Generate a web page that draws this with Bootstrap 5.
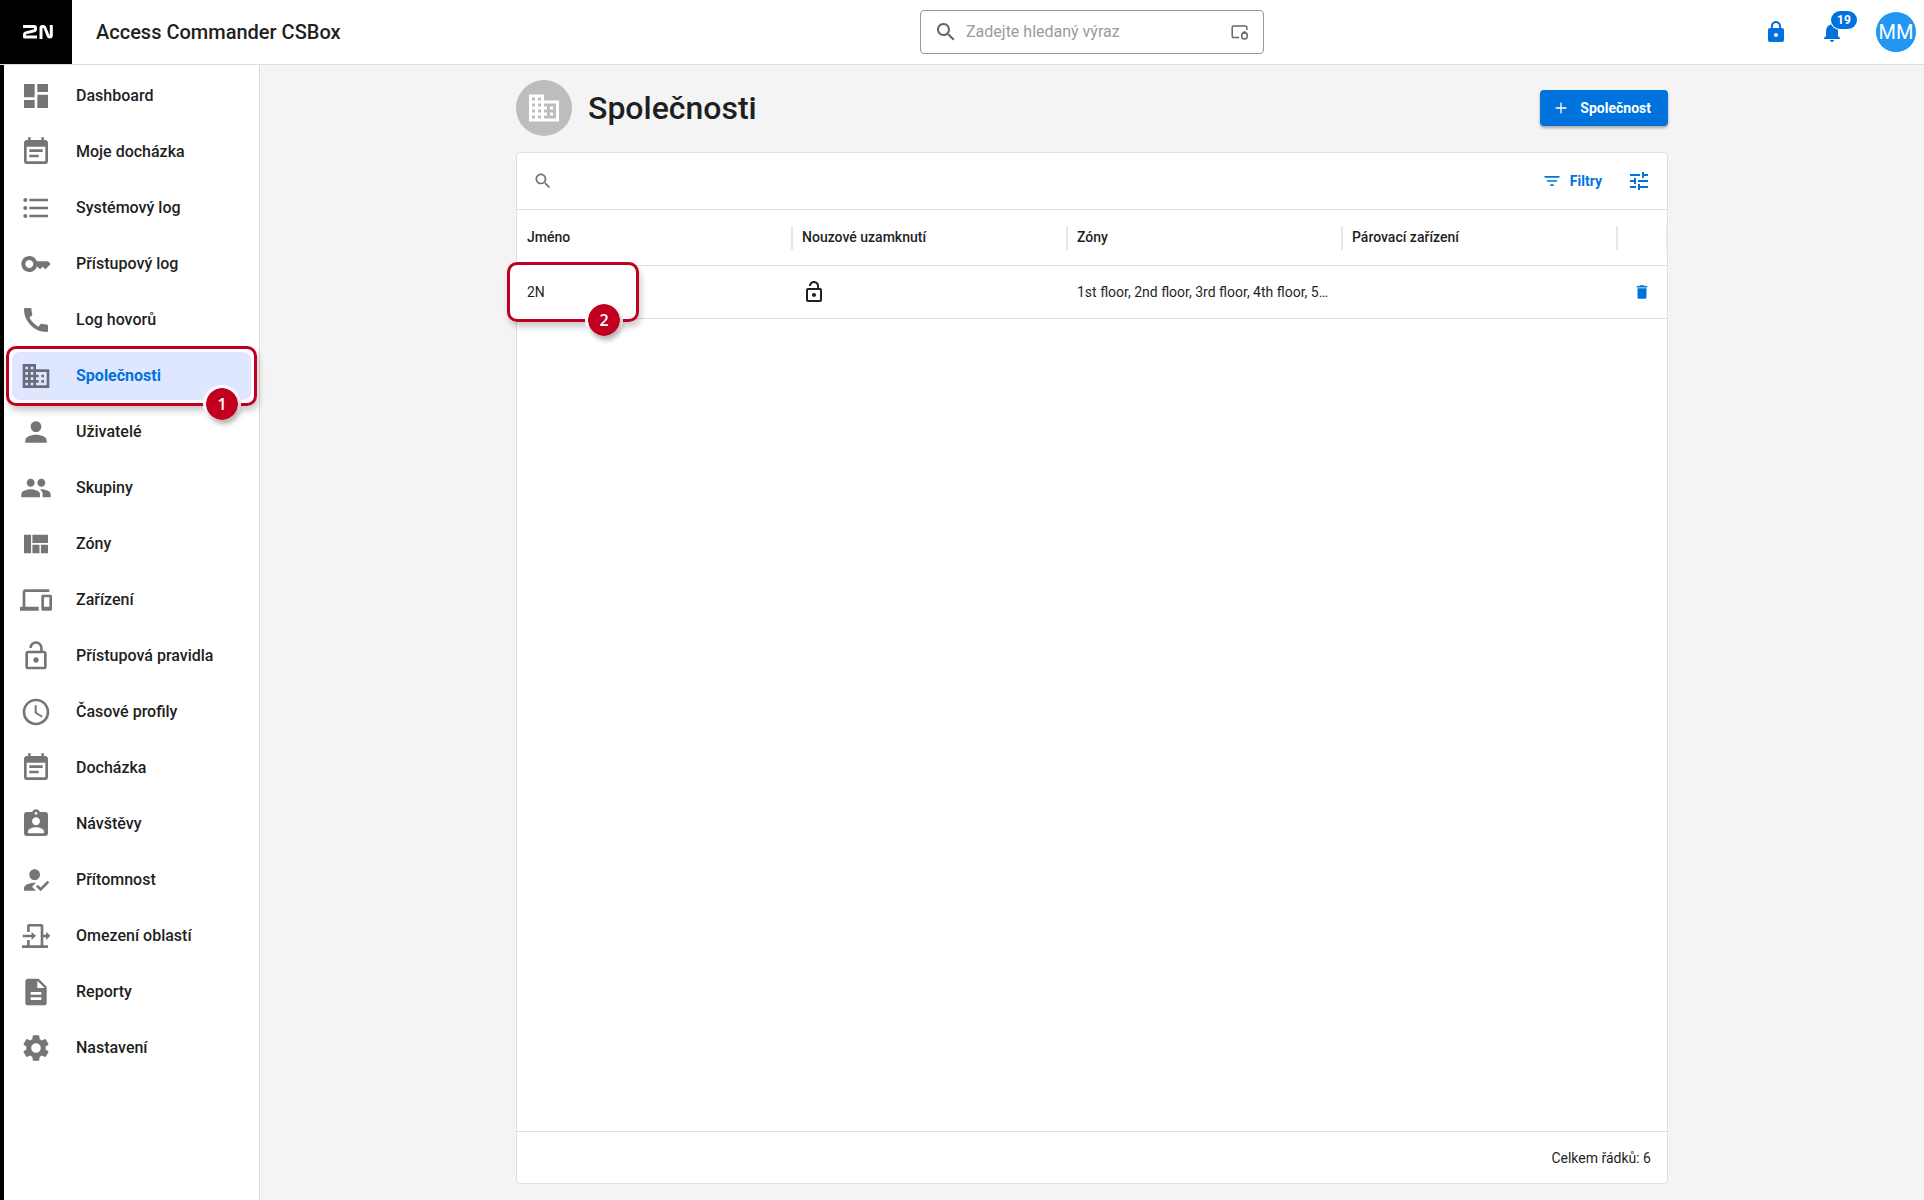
<!DOCTYPE html>
<html lang="cs">
<head>
<meta charset="utf-8">
<meta name="viewport" content="width=device-width, initial-scale=1">
<title>Access Commander – Společnosti</title>
<link href="https://cdn.jsdelivr.net/npm/bootstrap@5.3.0/dist/css/bootstrap.min.css" rel="stylesheet">
<style>
  :root { --brand: #0072de; --ink: #1f1f1f; --line: #e0e0e0; --mark: #c10020; }
  body { font-family: Roboto, "Noto Sans", sans-serif; color: var(--ink); background: #f4f4f4; font-size: 14px; line-height: 20px; }
  svg { fill: currentColor; display: block; flex: none; }
  .line-art { fill: none; stroke: currentColor; }
  .i18 { width: 18px; height: 18px; }
  .i20 { width: 20px; height: 20px; }
  .i24 { width: 24px; height: 24px; }
  .i32 { width: 32px; height: 32px; }
  .i36 { width: 36px; height: 36px; }

  .topbar { height: 65px; border-bottom: 1px solid #d5dff0; }
  .topbar-start { flex: 1 0 260px; }
  .topbar-end { flex: 1 0 0px; width: 0; gap: 16px; }
  .logo-tile { width: 72px; background: #000; color: #fff; }
  .app-name { font-size: 20px; font-weight: 500; margin-left: 24px; }
  .global-search { width: 344px; height: 44px; border: 1px solid #999; border-radius: 4px; padding: 0 14px 0 13px; color: #666; }
  .global-search input { font-size: 16px; color: var(--ink); outline: 0; }
  .global-search input::placeholder { color: #9b9b9b; opacity: 1; }
  .round-btn { width: 40px; height: 40px; color: var(--brand); }
  .count-pill { background: var(--brand); color: #fff; font-size: 12px; font-weight: 700; line-height: 18px; padding: 0 6px; top: -1px; left: 19px; min-width: 26px; box-shadow: 0 0 0 1px #fff; }
  .user-dot { width: 40px; height: 40px; background: #2196f3; color: #fff; font-size: 20px; }

  .side { width: 260px; border-left: 4px solid #000; border-right: 1px solid #dcdcdc; padding: 7px 8px 8px; }
  .side-link { height: 48px; margin-bottom: 8px; padding-left: 8px; gap: 24px; border-radius: 8px; font-size: 16px; font-weight: 500; color: var(--ink); text-decoration: none; }
  .side-link svg { color: #757575; }
  .side-link.current { background: #dfe7ff; color: var(--brand); font-weight: 700; }
  .side-link.current svg { color: #686c7c; }

  .page-wrap { max-width: 1200px; padding: 15px 24px 16px; }
  .page-icon { width: 56px; height: 56px; background: #bdbdbd; color: #fff; }
  .page-title { font-size: 32px; line-height: 40px; font-weight: 500; }
  .btn-add { background: var(--brand); color: #fff; height: 36px; padding: 0 17px 0 11px; gap: 9px; border-radius: 4px; font-size: 14px; font-weight: 700; box-shadow: 0 2px 3px rgba(0,0,0,.3); }
  .panel { border: 1px solid var(--line); border-radius: 4px; margin-top: 16px; }
  .panel-tools { height: 57px; padding: 0 16px; border-bottom: 1px solid var(--line); gap: 25px; }
  .tool-btn { color: var(--brand); font-size: 14px; font-weight: 700; }
  .grid-table { table-layout: fixed; }
  .grid-table th { position: relative; height: 55px; padding: 0 10px; font-weight: 500; border-bottom: 1px solid var(--line); }
  .grid-table th::after { content: ""; position: absolute; right: -1px; top: 16px; width: 2px; height: 24px; background: #e6e6e6; }
  .grid-table td { height: 53px; padding: 0 10px; border-bottom: 1px solid var(--line); }
  .row-action { margin-right: 6px; }
  .panel-foot { height: 52px; padding: 0 16px; border-top: 1px solid var(--line); }

  .callout { position: absolute; border: 3px solid var(--mark); border-radius: 10px; box-shadow: 2px 5px 6px rgba(0,0,0,.2); pointer-events: none; }
  .callout-nav { inset: -6px; }
  .callout-cell { top: -4px; left: -10px; width: 132px; height: 60px; box-shadow: 2px 5px 6px rgba(0,0,0,.2), inset 0 0 0 8px #fff; }
  .callout-num { position: absolute; bottom: -20px; right: 13px; width: 38px; height: 38px; border: 3px solid #fff; border-radius: 50%; background: var(--mark); background-clip: padding-box; color: #fff; font: 600 16px/32px "Open Sans", sans-serif; text-align: center; }
  .callout-num::after { content: ""; position: absolute; inset: 0; border-radius: 50%; box-shadow: 2px 4px 5px rgba(0,0,0,.3); }
</style>
<script src="https://cdn.jsdelivr.net/npm/bootstrap@5.3.0/dist/js/bootstrap.bundle.min.js"></script>
</head>
<body class="d-flex flex-column min-vh-100">
<svg class="d-none" aria-hidden="true">
  <symbol id="i-building" viewBox="0 0 24 24"><path d="M12 7V3H2v18h20V7H12zM6 19H4v-2h2v2zm0-4H4v-2h2v2zm0-4H4V9h2v2zm0-4H4V5h2v2zm4 12H8v-2h2v2zm0-4H8v-2h2v2zm0-4H8V9h2v2zm0-4H8V5h2v2zm10 12h-8v-2h2v-2h-2v-2h2v-2h-2V9h8v10zm-2-8h-2v2h2v-2zm0 4h-2v2h2v-2z"/></symbol>
  <symbol id="i-note" viewBox="0 0 24 24"><path d="M14 14H7v2h7v-2zm5-11h-1V1h-2v2H8V1H6v2H5c-1.11 0-1.99.9-1.99 2L3 19c0 1.1.89 2 2 2h14c1.1 0 2-.9 2-2V5c0-1.1-.9-2-2-2zm0 16H5V8h14v11zm-2-9H7v2h10v-2z"/></symbol>
  <symbol id="i-unlock" viewBox="0 0 24 24"><path d="M12 17c1.1 0 2-.9 2-2s-.9-2-2-2-2 .9-2 2 .9 2 2 2zm6-9h-1V6c0-2.76-2.24-5-5-5S7 3.24 7 6h1.9c0-1.71 1.39-3.1 3.1-3.1 1.71 0 3.1 1.39 3.1 3.1v2H6c-1.1 0-2 .9-2 2v10c0 1.1.9 2 2 2h12c1.1 0 2-.9 2-2V10c0-1.1-.9-2-2-2zm0 12H6V10h12v10z"/></symbol>
  <symbol id="i-search" viewBox="0 0 24 24"><path d="M15.5 14h-.79l-.28-.27C15.41 12.59 16 11.11 16 9.5 16 5.91 13.09 3 9.5 3S3 5.91 3 9.5 5.91 16 9.5 16c1.61 0 3.09-.59 4.23-1.57l.27.28v.79l5 4.99L20.49 19l-4.99-5zm-6 0C7.01 14 5 11.99 5 9.5S7.01 5 9.5 5 14 7.01 14 9.5 11.99 14 9.5 14z"/></symbol>
</svg>

<header class="topbar bg-white d-flex align-items-center">
  <div class="topbar-start d-flex align-items-center align-self-stretch">
    <a href="#" class="logo-tile align-self-stretch d-flex align-items-center justify-content-center" aria-label="2N">
      <svg class="line-art ms-1" width="32" height="16" viewBox="0 0 32 16" stroke-width="3" stroke-linejoin="round"><path d="M1 2.500H12a1.500 1.500 0 0 1 1.500 1.500v1.200c0 .8-.5 1.300-1.200 1.500L3.700 8.900c-.8.200-1.200.8-1.200 1.500v2.600H15"/><path d="M19 15V4c0-1 .7-1.500 1.500-1.500h.8c.7 0 1.200.3 1.500 1l3.400 8.500c.3.700.8 1 1.500 1h.2c.8 0 1.400-.6 1.400-1.500V1"/></svg>
    </a>
    <span class="app-name text-nowrap">Access Commander CSBox</span>
  </div>
  <label class="global-search d-flex align-items-center bg-white">
    <svg class="i24"><use href="#i-search"/></svg>
    <input type="search" class="border-0 p-0 bg-transparent flex-grow-1 ms-2" placeholder="Zadejte hledaný výraz" aria-label="Zadejte hledaný výraz">
    <svg class="line-art" width="18" height="18" viewBox="0 0 18 18" stroke-width="1.500"><path d="M8 14.500H2.500A1.300 1.300 0 0 1 1.200 13.200V4.300A1.300 1.300 0 0 1 2.500 3H14.500A1.300 1.300 0 0 1 15.800 4.300V7"/><ellipse cx="13.500" cy="12.700" rx="2.800" ry="3.300"/><path d="M13.500 8v3"/></svg>
  </label>
  <div class="topbar-end d-flex align-items-center justify-content-end">
    <button type="button" class="round-btn btn border-0 p-0 d-flex align-items-center justify-content-center" aria-label="Uzamknout">
      <svg class="i24" viewBox="0 0 24 24"><path d="M18 8h-1V6c0-2.760-2.240-5-5-5S7 3.240 7 6v2H6c-1.100 0-2 .9-2 2v10c0 1.100.9 2 2 2h12c1.100 0 2-.9 2-2V10c0-1.100-.9-2-2-2zm-6 9c-1.100 0-2-.9-2-2s.9-2 2-2 2 .9 2 2-.9 2-2 2zm3.100-9H8.900V6c0-1.710 1.390-3.100 3.100-3.100s3.100 1.390 3.100 3.100v2z"/></svg>
    </button>
    <button type="button" class="round-btn btn border-0 p-0 d-flex align-items-center justify-content-center position-relative" aria-label="Oznámení">
      <svg class="i24" viewBox="0 0 24 24"><path d="M12 22c1.100 0 2-.9 2-2h-4c0 1.100.89 2 2 2zm6-6v-5c0-3.070-1.640-5.640-4.500-6.320V4c0-.83-.67-1.500-1.500-1.500s-1.500.67-1.500 1.500v.68C7.630 5.360 6 7.920 6 11v5l-2 2v1h16v-1l-2-2z"/></svg>
      <span class="count-pill position-absolute rounded-pill">19</span>
    </button>
    <button type="button" class="user-dot btn border-0 p-0 mx-2 rounded-circle">MM</button>
  </div>
</header>

<div class="d-flex flex-grow-1">
  <nav class="side bg-white flex-shrink-0" aria-label="Hlavní nabídka">
    <a href="#" class="side-link d-flex align-items-center"><svg class="i32" viewBox="0 0 24 24"><path d="M3 13h8V3H3v10zm0 8h8v-6H3v6zm10 0h8V11h-8v10zm0-18v6h8V3h-8z"/></svg>Dashboard</a>
    <a href="#" class="side-link d-flex align-items-center"><svg class="i32"><use href="#i-note"/></svg>Moje docházka</a>
    <a href="#" class="side-link d-flex align-items-center"><svg class="i32" viewBox="0 0 24 24"><circle cx="4" cy="6" r="1.500"/><circle cx="4" cy="12" r="1.500"/><circle cx="4" cy="18" r="1.500"/><path d="M7 5h14v2H7zM7 11h14v2H7zM7 17h14v2H7z"/></svg>Systémový log</a>
    <a href="#" class="side-link d-flex align-items-center"><svg class="i32" viewBox="0 0 24 24"><path d="M21 10h-8.350C11.830 7.670 9.610 6 7 6c-3.310 0-6 2.690-6 6s2.690 6 6 6c2.610 0 4.830-1.670 5.650-4H13l2 2 2-2 2 2 4-4.040L21 10zM7 15c-1.650 0-3-1.350-3-3s1.350-3 3-3 3 1.350 3 3-1.350 3-3 3z"/></svg>Přístupový log</a>
    <a href="#" class="side-link d-flex align-items-center"><svg class="i32" viewBox="0 0 24 24"><path d="M20.010 15.380c-1.230 0-2.420-.2-3.530-.56-.35-.12-.74-.03-1.010.24l-1.570 1.970c-2.830-1.350-5.480-3.900-6.890-6.830l1.950-1.660c.27-.28.35-.67.24-1.020-.37-1.110-.56-2.300-.56-3.530 0-.54-.45-.99-.99-.99H4.190C3.650 3 3 3.240 3 3.990 3 13.280 10.730 21 20.010 21c.71 0 .99-.63.99-1.180v-3.450c0-.54-.45-.99-.99-.99z"/></svg>Log hovorů</a>
    <a href="#" class="side-link current d-flex align-items-center position-relative" aria-current="page"><svg class="i32"><use href="#i-building"/></svg>Společnosti
      <span class="callout callout-nav"><span class="callout-num">1</span></span></a>
    <a href="#" class="side-link d-flex align-items-center"><svg class="i32" viewBox="0 0 24 24"><path d="M12 12c2.210 0 4-1.790 4-4s-1.790-4-4-4-4 1.790-4 4 1.790 4 4 4zm0 2c-2.670 0-8 1.340-8 4v2h16v-2c0-2.660-5.330-4-8-4z"/></svg>Uživatelé</a>
    <a href="#" class="side-link d-flex align-items-center"><svg class="i32" viewBox="0 0 24 24"><path d="M16 11c1.660 0 2.990-1.340 2.990-3S17.660 5 16 5c-1.660 0-3 1.340-3 3s1.340 3 3 3zm-8 0c1.660 0 2.990-1.340 2.990-3S9.660 5 8 5C6.340 5 5 6.340 5 8s1.340 3 3 3zm0 2c-2.330 0-7 1.170-7 3.500V19h14v-2.500c0-2.330-4.670-3.500-7-3.500zm8 0c-.29 0-.62.02-.97.05 1.160.84 1.970 1.970 1.970 3.450V19h6v-2.500c0-2.330-4.670-3.500-7-3.500z"/></svg>Skupiny</a>
    <a href="#" class="side-link d-flex align-items-center"><svg class="i32" viewBox="0 0 24 24"><path d="M3 5h5.300v14H3zM9.300 5H21v6.300H9.300zM9.300 12.500h5.300V19H9.300zM15.700 12.500H21V19h-5.300z"/></svg>Zóny</a>
    <a href="#" class="side-link d-flex align-items-center"><svg class="i32" viewBox="0 0 24 24"><path d="M4 6h18V4H4c-1.100 0-2 .9-2 2v11H0v3h14v-3H4V6zm19 2h-6c-.55 0-1 .45-1 1v10c0 .55.45 1 1 1h6c.55 0 1-.45 1-1V9c0-.55-.45-1-1-1zm-1 9h-4v-7h4v7z"/></svg>Zařízení</a>
    <a href="#" class="side-link d-flex align-items-center"><svg class="i32"><use href="#i-unlock"/></svg>Přístupová pravidla</a>
    <a href="#" class="side-link d-flex align-items-center"><svg class="i32" viewBox="0 0 24 24"><path d="M11.990 2C6.470 2 2 6.480 2 12s4.470 10 9.990 10C17.520 22 22 17.520 22 12S17.520 2 11.990 2zM12 20c-4.420 0-8-3.580-8-8s3.580-8 8-8 8 3.580 8 8-3.580 8-8 8zm.5-13H11v6l5.250 3.150.75-1.230-4.500-2.670z"/></svg>Časové profily</a>
    <a href="#" class="side-link d-flex align-items-center"><svg class="i32"><use href="#i-note"/></svg>Docházka</a>
    <a href="#" class="side-link d-flex align-items-center"><svg class="i32" viewBox="0 0 24 24"><path d="M19 3h-4.180C14.400 1.840 13.300 1 12 1c-1.300 0-2.400.84-2.820 2H5c-1.100 0-2 .9-2 2v14c0 1.100.9 2 2 2h14c1.100 0 2-.9 2-2V5c0-1.100-.9-2-2-2zm-7 0c.55 0 1 .45 1 1s-.45 1-1 1-1-.45-1-1 .45-1 1-1zm0 4c1.660 0 3 1.340 3 3s-1.340 3-3 3-3-1.340-3-3 1.340-3 3-3zm6 12H6v-1.400c0-2 4-3.100 6-3.100s6 1.100 6 3.100V19z"/></svg>Návštěvy</a>
    <a href="#" class="side-link d-flex align-items-center"><svg class="i32" viewBox="0 0 24 24"><path d="M9 17l3-2.940c-.39-.04-.68-.06-1-.06-2.670 0-8 1.340-8 4v2h9l-3-3zm2-5c2.210 0 4-1.790 4-4s-1.790-4-4-4-4 1.790-4 4 1.790 4 4 4zM15.470 20.500L12 17l1.400-1.410 2.070 2.080 5.130-5.170 1.400 1.410z"/></svg>Přítomnost</a>
    <a href="#" class="side-link d-flex align-items-center"><svg class="i32" viewBox="0 0 24 24"><path d="M1.500 19h3.800v-4h2v4h8.200V4.800H7.300V9h-2V4.600C5.300 3.700 6 3 6.900 3h9c.9 0 1.600.7 1.600 1.600V11h2V9l3.300 2.900L19.500 15v-2h-2v6H21v2H1.500zM2 11h6.700V9L12 11.900 8.700 15v-2H2z"/></svg>Omezení oblastí</a>
    <a href="#" class="side-link d-flex align-items-center"><svg class="i32" viewBox="0 0 24 24"><path d="M14 2H6c-1.100 0-1.990.9-1.990 2L4 20c0 1.100.89 2 1.990 2H18c1.100 0 2-.9 2-2V8l-6-6zm2 16H8v-2h8v2zm0-4H8v-2h8v2zm-3-5V3.500L18.500 9H13z"/></svg>Reporty</a>
    <a href="#" class="side-link d-flex align-items-center"><svg class="i32" viewBox="0 0 24 24"><path d="M19.140 12.940c.04-.3.06-.61.06-.94 0-.32-.02-.64-.07-.94l2.030-1.580c.18-.14.23-.41.12-.61l-1.920-3.320c-.12-.22-.37-.29-.59-.22l-2.390.96c-.5-.38-1.030-.7-1.620-.94L14.400 2.810c-.04-.24-.24-.41-.48-.41h-3.840c-.24 0-.43.17-.47.41l-.36 2.540c-.59.24-1.130.57-1.620.94l-2.390-.96c-.22-.08-.47 0-.59.22L2.740 8.870c-.12.21-.08.47.12.61l2.030 1.580c-.05.3-.09.63-.09.94s.02.64.07.94l-2.030 1.580c-.18.14-.23.41-.12.61l1.920 3.320c.12.22.37.29.59.22l2.390-.96c.5.38 1.030.7 1.620.94l.36 2.540c.05.24.24.41.48.41h3.840c.24 0 .44-.17.47-.41l.36-2.540c.59-.24 1.130-.56 1.620-.94l2.390.96c.22.08.47 0 .59-.22l1.920-3.320c.12-.22.07-.47-.12-.61l-2.010-1.580zM12 15.600c-1.980 0-3.600-1.620-3.600-3.600s1.620-3.600 3.600-3.600 3.600 1.620 3.600 3.600-1.620 3.600-3.600 3.600z"/></svg>Nastavení</a>
  </nav>

  <main class="flex-grow-1 d-flex">
    <div class="page-wrap w-100 mx-auto d-flex flex-column">
      <div class="d-flex align-items-center">
        <span class="page-icon rounded-circle d-flex align-items-center justify-content-center"><svg class="i36"><use href="#i-building"/></svg></span>
        <h1 class="page-title ms-3 mb-0">Společnosti</h1>
        <button type="button" class="btn btn-add border-0 ms-auto d-flex align-items-center"><svg class="i20" viewBox="0 0 24 24"><path d="M18.500 12.800h-5.700v5.700h-1.600v-5.700H5.500v-1.600h5.700V5.500h1.600v5.700h5.700v1.600z"/></svg>Společnost</button>
      </div>

      <section class="panel bg-white flex-grow-1 d-flex flex-column">
        <div class="panel-tools d-flex align-items-center">
          <button type="button" class="btn border-0 p-0 text-secondary" aria-label="Hledat"><svg class="i20"><use href="#i-search"/></svg></button>
          <button type="button" class="tool-btn btn border-0 p-0 ms-auto d-flex align-items-center gap-2"><svg class="i20" viewBox="0 0 24 24"><path d="M10 18h4v-2h-4v2zM3 6v2h18V6H3zm3 7h12v-2H6v2z"/></svg>Filtry</button>
          <button type="button" class="tool-btn btn border-0 p-0" aria-label="Nastavení sloupců"><svg class="i24" viewBox="0 0 24 24"><path d="M3 17v2h6v-2H3zM3 5v2h10V5H3zm10 16v-2h8v-2h-8v-2h-2v6h2zM7 9v2H3v2h4v2h2V9H7zm14 4v-2H11v2h10zm-6-4h2V7h4V5h-4V3h-2v6z"/></svg></button>
        </div>
        <table class="grid-table w-100">
          <colgroup><col><col><col><col><col width="50"></colgroup>
          <thead><tr><th>Jméno</th><th>Nouzové uzamknutí</th><th>Zóny</th><th>Párovací zařízení</th><th aria-label="Akce"></th></tr></thead>
          <tbody>
            <tr>
              <td class="position-relative"><span class="callout callout-cell"><span class="callout-num">2</span></span><span class="position-relative">2N</span></td>
              <td><svg class="i24"><use href="#i-unlock"/></svg></td>
              <td class="text-nowrap">1st floor, 2nd floor, 3rd floor, 4th floor, 5…</td>
              <td></td>
              <td><button type="button" class="tool-btn row-action btn border-0 p-0 ms-auto d-block" aria-label="Smazat"><svg class="i18" viewBox="0 0 24 24"><path d="M6 19c0 1.100.9 2 2 2h8c1.100 0 2-.9 2-2V7H6v12zM19 4h-3.500l-1-1h-5l-1 1H5v2h14V4z"/></svg></button></td>
            </tr>
          </tbody>
        </table>
        <div class="panel-foot mt-auto d-flex align-items-center justify-content-end">Celkem řádků: 6</div>
      </section>
    </div>
  </main>
</div>
</body>
</html>
